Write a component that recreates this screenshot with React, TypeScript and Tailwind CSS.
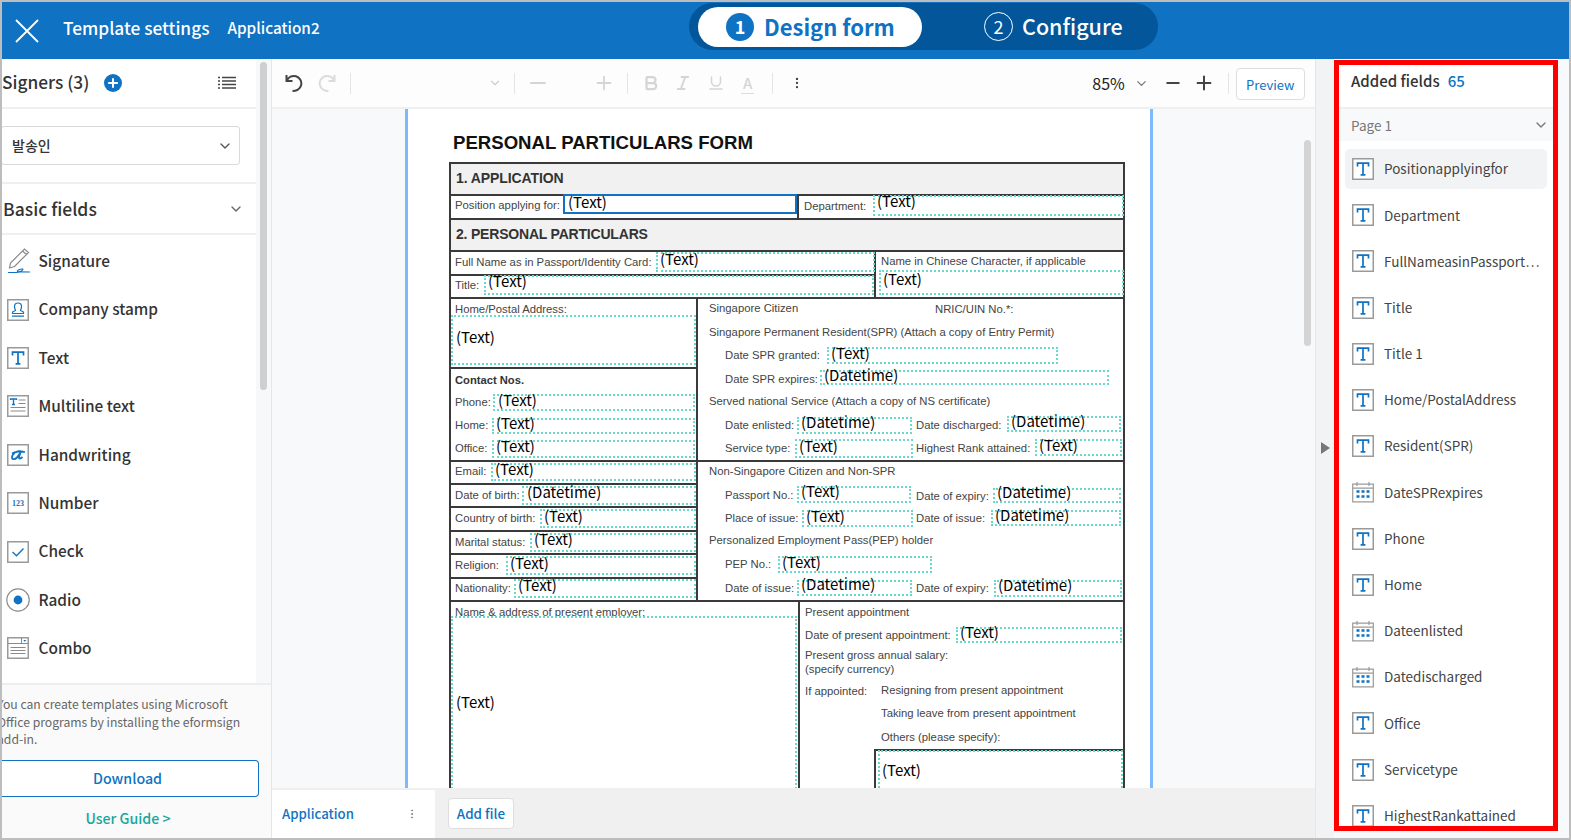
import { ChevronDown, Minus, Plus, EllipsisVertical, Bold, Italic, Underline } from "lucide-react";

const sans = "font-['Noto_Sans_CJK_KR','Noto_Sans',sans-serif]";

type Line = [number, number, number, number];
type Label = [string, number, number];
type Field = [string, number, number, number, number, number, number];

// page canvas origin is (407, 110)
const ox = 407;
const oy = 110;

const lines: Line[] = [
  [449, 162, 1124, 162],
  [449, 194, 1124, 194],
  [449, 218, 1124, 218],
  [449, 250, 1124, 250],
  [449, 274, 875, 274],
  [449, 297, 1124, 297],
  [449, 367, 697, 367],
  [449, 460, 1124, 460],
  [449, 483, 697, 483],
  [449, 506, 697, 506],
  [449, 530, 697, 530],
  [449, 553, 697, 553],
  [449, 577, 697, 577],
  [449, 600, 1124, 600],
  [874, 749, 1124, 749],
  [449, 162, 449, 790],
  [1123, 162, 1123, 790],
  [797, 194, 797, 218],
  [874, 250, 874, 297],
  [696, 297, 696, 600],
  [798, 600, 798, 790],
  [874, 749, 874, 790],
];

const labels: Label[] = [
  ["Position applying for:", 455, 206],
  ["Department:", 804, 207],
  ["Full Name as in Passport/Identity Card:", 455, 263],
  ["Title:", 455, 286],
  ["Name in Chinese Character, if applicable", 881, 262],
  ["Home/Postal Address:", 455, 310],
  ["Phone:", 455, 403],
  ["Home:", 455, 426],
  ["Office:", 455, 449],
  ["Email:", 455, 472],
  ["Date of birth:", 455, 496],
  ["Country of birth:", 455, 519],
  ["Marital status:", 455, 543],
  ["Religion:", 455, 566],
  ["Nationality:", 455, 589],
  ["Singapore Citizen", 709, 309],
  ["NRIC/UIN No.*:", 935, 310],
  ["Singapore Permanent Resident(SPR) (Attach a copy of Entry Permit)", 709, 333],
  ["Date SPR granted:", 725, 356],
  ["Date SPR expires:", 725, 380],
  ["Served national Service (Attach a copy of NS certificate)", 709, 402],
  ["Date enlisted:", 725, 426],
  ["Date discharged:", 916, 426],
  ["Service type:", 725, 449],
  ["Highest Rank attained:", 916, 449],
  ["Non-Singapore Citizen and Non-SPR", 709, 472],
  ["Passport No.:", 725, 496],
  ["Date of expiry:", 916, 497],
  ["Place of issue:", 725, 519],
  ["Date of issue:", 916, 519],
  ["Personalized Employment Pass(PEP) holder", 709, 541],
  ["PEP No.:", 725, 565],
  ["Date of issue:", 725, 589],
  ["Date of expiry:", 916, 589],
  ["Name & address of present employer:", 455, 613],
  ["Present appointment", 805, 613],
  ["Date of present appointment:", 805, 636],
  ["Present gross annual salary:", 805, 656],
  ["(specify currency)", 805, 670],
  ["If appointed:", 805, 692],
  ["Resigning from present appointment", 881, 691],
  ["Taking leave from present appointment", 881, 714],
  ["Others (please specify):", 881, 738],
];

// text, left, top, right, bottom, text x, text center y
const fields: Field[] = [
  ["(Text)", 873, 195, 1124, 216, 877, 202],
  ["(Text)", 656, 252, 875, 272, 660, 260],
  ["(Text)", 484, 275, 874, 295, 488, 282],
  ["(Text)", 879, 270, 1124, 295, 883, 280],
  ["(Text)", 451, 315, 696, 365, 456, 338],
  ["(Text)", 493, 394, 695, 411, 498, 401],
  ["(Text)", 492, 418, 695, 434, 496, 424],
  ["(Text)", 492, 440, 695, 458, 496, 447],
  ["(Text)", 491, 463, 696, 481, 495, 470],
  ["(Datetime)", 522, 486, 696, 505, 527, 493],
  ["(Text)", 540, 509, 696, 528, 544, 517],
  ["(Text)", 530, 533, 696, 552, 534, 540],
  ["(Text)", 506, 556, 696, 575, 510, 564],
  ["(Text)", 514, 579, 696, 598, 518, 586],
  ["(Text)", 827, 347, 1058, 364, 831, 354],
  ["(Datetime)", 820, 370, 1109, 385, 824, 376],
  ["(Datetime)", 797, 417, 912, 434, 801, 423],
  ["(Datetime)", 1007, 416, 1121, 432, 1011, 422],
  ["(Text)", 795, 439, 913, 458, 799, 447],
  ["(Text)", 1035, 439, 1122, 456, 1039, 446],
  ["(Text)", 797, 486, 911, 503, 801, 492],
  ["(Datetime)", 993, 488, 1121, 503, 997, 493],
  ["(Text)", 802, 510, 913, 527, 806, 517],
  ["(Datetime)", 991, 510, 1121, 526, 995, 516],
  ["(Text)", 778, 556, 932, 573, 782, 563],
  ["(Datetime)", 797, 580, 912, 596, 801, 585],
  ["(Datetime)", 994, 580, 1122, 597, 998, 586],
  ["(Text)", 451, 616, 797, 800, 456, 703],
  ["(Text)", 956, 627, 1122, 643, 960, 633],
  ["(Text)", 878, 750, 1123, 800, 882, 771],
];

const IconBox = ({ children }: { children: React.ReactNode }) => (
  <svg width="22" height="22" viewBox="0 0 22 22" className="shrink-0">
    <rect x="0.75" y="0.75" width="20.5" height="20.5" fill="#fff" stroke="#9a9a9a" strokeWidth="1.5" />
    {children}
  </svg>
);

const TIcon = () => (
  <IconBox>
    <path d="M5.5 8.5V5.2h11v3.3M11 5.2v11.6M8.6 16.8h4.8" fill="none" stroke="#0f72c2" strokeWidth="1.7" />
  </IconBox>
);

const CalIcon = () => (
  <svg width="22" height="22" viewBox="0 0 22 22" className="shrink-0">
    <path d="M.7 3.2h20.6v17.6H.7zM.7 7.2h20.6M5 1v4M17 1v4" fill="#fff" stroke="#9a9a9a" strokeWidth="1.2" />
    <path d="M4.5 10.5h3M9.5 10.5h3M14.5 10.5h3M4.5 15.5h3M9.5 15.5h3M14.5 15.5h3" stroke="#0f72c2" strokeWidth="2.4" />
  </svg>
);

const SignatureIcon = () => (
  <svg width="24" height="26" viewBox="0 0 24 26" className="shrink-0">
    <path d="M2.500 20l1-5L17.500 1l4 3.500-14 14zM15.500 3l4 3.500" fill="none" stroke="#8a8a8a" strokeWidth="1.200" />
    <path d="M1 24.500h8c4 0 7-2.500 7-3.200 0-1-7 .7-5.500 2.200.5.500 3 .5 12.500.5" fill="none" stroke="#0f72c2" strokeWidth="1.100" />
  </svg>
);

const UndoIcon = ({ color, flip }: { color: string; flip?: boolean }) => (
  <svg width="18" height="18" viewBox="0 0 18 18" className={`shrink-0 ${flip ? "-scale-x-100" : ""}`}>
    <path d="M1.500 1v6h6M1.800 6.800A7.500 7.500 0 1 1 7.500 16.800" fill="none" stroke={color} strokeWidth="2" />
  </svg>
);

const basicFields: [string, React.ReactNode][] = [
  ["Signature", <SignatureIcon />],
  ["Company stamp", <IconBox><path d="M8.5 11.5c0-1-1-1.500-1-4 0-2.200 1.500-3.500 3.500-3.500s3.500 1.300 3.500 3.500c0 2.500-1 3-1 4l3 1.500v1.500H5.500V13zM5 17.200h12" fill="none" stroke="#0f72c2" strokeWidth="1.200" /></IconBox>],
  ["Text", <TIcon />],
  ["Multiline text", <IconBox><path d="M3.500 5v-1h6v1M6.500 4v5.500M5 9.500h3" fill="none" stroke="#0f72c2" strokeWidth="1.300" /><path d="M11.500 5h7M11.500 8.500h7M3.500 12.500h15M3.500 16h15" stroke="#8a8a8a" strokeWidth="1" /></IconBox>],
  ["Handwriting", <IconBox><path d="M14 7.500c-4-1.500-9 2.500-9 6 0 2.500 3 2 5 0l3.500-5-1.500 4.500c-.5 2 1.500 2 3.500 0M5 9.500c3-2 9-2.500 13-1.500" fill="none" stroke="#0f72c2" strokeWidth="1.800" /></IconBox>],
  ["Number", <IconBox><text x="11" y="13.500" textAnchor="middle" fontSize="8" fontWeight="700" fill="#0f72c2" fontFamily="'Liberation Serif',serif">123</text></IconBox>],
  ["Check", <IconBox><path d="M5.500 11l4 3.800 7-7.300" fill="none" stroke="#0f72c2" strokeWidth="1.300" /></IconBox>],
  ["Radio", <svg width="24" height="24" viewBox="0 0 24 24" className="shrink-0 -ml-px"><circle cx="12" cy="12" r="11.200" fill="#fff" stroke="#8a8a8a" strokeWidth="1.200" /><circle cx="12" cy="12" r="4.400" fill="#0f72c2" /></svg>],
  ["Combo", <IconBox><path d="M.75 6.500h20.500M14.500.75v5.750M3.500 10.500h15M3.500 13.500h15M3.500 16.500h15" fill="none" stroke="#8a8a8a" strokeWidth="1" /><path d="M16.300 3h3l-1.500 1.800z" fill="#0f72c2" /></IconBox>],
];

const addedFields: [string, boolean][] = [
  ["Positionapplyingfor", false],
  ["Department", false],
  ["FullNameasinPassport⋯", false],
  ["Title", false],
  ["Title 1", false],
  ["Home/PostalAddress", false],
  ["Resident(SPR)", false],
  ["DateSPRexpires", true],
  ["Phone", false],
  ["Home", false],
  ["Dateenlisted", true],
  ["Datedischarged", true],
  ["Office", false],
  ["Servicetype", false],
  ["HighestRankattained", false],
];

const Sep = () => <div className="h-[21px] w-px bg-[#e4e4e4]" />;

const FormPage = () => (
  <div className="relative h-full w-[748px] overflow-hidden border-x-[3px] border-x-[#7db9fb] bg-white font-['Liberation_Sans',Arial,sans-serif]">
    {/* document canvas: everything is placed where the form author dropped it */}
    <div className="absolute top-px bottom-0 left-[-1px] w-[745px]">
      <div className="absolute bg-[#f1f1f1]" style={{ left: 449 - ox, top: 162 - oy, width: 675, height: 32 }} />
      <div className="absolute bg-[#f1f1f1]" style={{ left: 449 - ox, top: 218 - oy, width: 675, height: 32 }} />
      <div className="absolute whitespace-nowrap text-[18.6px] leading-none font-bold text-[#111]" style={{ left: 453 - ox, top: 134 - oy }}>
        PERSONAL PARTICULARS FORM
      </div>
      <div className="absolute text-[14px] leading-none font-bold tracking-[-0.1px] text-[#333]" style={{ left: 456 - ox, top: 171 - oy }}>
        1. APPLICATION
      </div>
      <div className="absolute text-[14px] leading-none font-bold tracking-[-0.2px] text-[#333]" style={{ left: 456 - ox, top: 227 - oy }}>
        2. PERSONAL PARTICULARS
      </div>
      <div className="absolute text-[11.2px] leading-none font-bold text-[#333]" style={{ left: 455 - ox, top: 375 - oy }}>
        Contact Nos.
      </div>
      {lines.map(([x1, y1, x2, y2], i) => (
        <div
          key={i}
          className="absolute bg-[#3a3a3a]"
          style={{ left: x1 - ox, top: y1 - oy, width: Math.max(x2 - x1, 2), height: Math.max(y2 - y1, 2) }}
        />
      ))}
      {labels.map(([t, x, y], i) => (
        <div key={i} className="absolute whitespace-nowrap text-[11.3px] leading-none text-[#444]" style={{ left: x - ox, top: y - 6 - oy }}>
          {t}
        </div>
      ))}
      <div className="absolute border-2 border-[#0f72c2]" style={{ left: 563 - ox, top: 194 - oy, width: 234, height: 20 }} />
      <div className={`absolute text-[15px] leading-none text-black ${sans}`} style={{ left: 568 - ox, top: 194 - oy }}>
        (Text)
      </div>
      {fields.map(([t, x1, y1, x2, y2, tx, ty], i) => (
        <div key={i}>
          <div
            className="absolute border-2 border-dotted border-[#6ad8cb]"
            style={{ left: x1 - ox, top: y1 - oy, width: x2 - x1, height: y2 - y1 }}
          />
          <div
            className={`absolute whitespace-nowrap text-[15px] leading-none text-black ${sans}`}
            style={{ left: tx - ox, top: ty - 9 - oy }}
          >
            {t}
          </div>
        </div>
      ))}
    </div>
  </div>
);

export default function App() {
  return (
    <div className={`flex h-[840px] w-[1571px] flex-col overflow-hidden border-2 border-[#bdbdbd] bg-white ${sans}`}>
      <header className="relative flex h-[57px] shrink-0 items-center bg-[#0f72c2] text-white">
        <svg width="24" height="24" viewBox="0 0 24 24" className="ml-[13px]">
          <path d="M1 1l22 22M23 1L1 23" stroke="#fff" strokeWidth="1.800" fill="none" />
        </svg>
        <span className="mb-[6px] ml-[24px] text-[17.3px] leading-none font-medium">Template settings</span>
        <span className="mb-[6px] ml-[18px] text-[15.3px] leading-none font-medium">Application2</span>
        <div className="absolute top-px left-[687px] flex h-[47px] w-[469px] items-center rounded-full bg-[#03569a] pl-[9px]">
          <div className="flex h-[40px] w-[224px] items-center rounded-full bg-white pl-[28px] text-[#0f72c2]">
            <span className="flex h-7 w-7 items-center justify-center rounded-full bg-[#0f72c2] pb-[2px] text-[18px] leading-none font-bold text-white">1</span>
            <span className="mb-[2px] ml-[10px] text-[22px] leading-none font-bold">Design form</span>
          </div>
          <span className="ml-[62px] flex h-[29px] w-[29px] items-center justify-center rounded-full border-[1.5px] border-white pb-[2px] text-[18px] leading-none">2</span>
          <span className="mb-[2px] ml-[9px] text-[21.5px] leading-none font-medium">Configure</span>
        </div>
      </header>

      <div className="flex min-h-0 flex-1">
        <aside className="flex w-[270px] shrink-0 flex-col border-r border-[#e6e6e6] bg-[#f7f8fa]">
          <div className="flex min-h-0 flex-1">
            <div className="flex w-[254px] flex-col bg-white">
              <div className="flex h-[50px] shrink-0 items-center border-b-2 border-[#efefef] pr-[20px]">
                <span className="mb-[2px] text-[17.3px] leading-none font-medium text-[#333]">Signers (3)</span>
                <span className="ml-[15px] flex h-[18px] w-[18px] items-center justify-center rounded-full bg-[#0f72c2]">
                  <Plus size={14} color="#fff" strokeWidth={3.500} />
                </span>
                <svg width="18" height="14" viewBox="0 0 18 14" className="ml-auto">
                  <path d="M0 1.500h2M4 1.500h14M0 5h2M4 5h14M0 8.500h2M4 8.500h14M0 12h2M4 12h14" stroke="#444" strokeWidth="1.400" />
                </svg>
              </div>
              <div className="flex h-[75px] shrink-0 items-center border-b-2 border-[#efefef]">
                <div className="-ml-px flex h-[39px] w-[239px] items-center justify-between rounded-[3px] border border-[#d9d9d9] pr-[6px] pl-[10px]">
                  <span className="text-[14px] font-medium text-[#333]">발송인</span>
                  <ChevronDown size={16} color="#555" />
                </div>
              </div>
              <div className="flex h-[51px] shrink-0 items-center justify-between border-b-2 border-[#efefef] pr-[12px] pl-px">
                <span className="text-[17.5px] leading-none font-medium text-[#333]">Basic fields</span>
                <ChevronDown size={16} color="#666" />
              </div>
              <div className="flex flex-col pt-[2px]">
                {basicFields.map(([name, icon]) => (
                  <div key={name} className="flex h-[48.400px] items-center pl-[5px]">
                    <span className="flex w-[31.500px]">{icon}</span>
                    <span className="mb-[1px] text-[15.4px] leading-none font-medium text-[#333]">{name}</span>
                  </div>
                ))}
              </div>
            </div>
            <div className="flex-1 px-1 pt-[3px]">
              <div className="h-[328px] rounded-full bg-[#cfcfcf]" />
            </div>
          </div>
          <div className="relative h-[155px] shrink-0 border-t-2 border-[#ededed] bg-[#fafafa]">
            <p className="-ml-[5px] w-[270px] pt-[11px] text-[12.2px] leading-[17.600px] text-[#666]">
              You can create templates using Microsoft
              <br />
              Office programs by installing the eformsign
              <br />
              add-in.
            </p>
            <button className="mt-[11px] flex h-[37px] w-[257px] items-center justify-center rounded-r-[4px] border border-l-0 border-[#0f72c2] bg-white pr-[5px] text-[14.2px] font-medium text-[#0f72c2]">
              Download
            </button>
            <div className="mt-[14px] w-[252px] text-center text-[14.2px] leading-none font-medium text-[#17a79b]">User Guide &gt;</div>
          </div>
        </aside>

        <main className="flex min-w-0 flex-1 flex-col bg-[#f8f9fb]">
          <div className="flex h-[50px] shrink-0 items-center border-b-2 border-[#efefef] bg-[#fdfdfd]">
            <div className="ml-[13px]"><UndoIcon color="#444" /></div>
            <div className="ml-[15px]"><UndoIcon color="#dcdcdc" flip /></div>
            <div className="ml-[14px]"><Sep /></div>
            <ChevronDown size={14} color="#ccc" className="ml-[137px]" />
            <div className="ml-[12px]"><Sep /></div>
            <Minus size={24} color="#d5d5d5" strokeWidth={2} className="ml-[11px]" />
            <Plus size={22} color="#d5d5d5" strokeWidth={2} className="ml-[43px]" />
            <div className="ml-[12px]"><Sep /></div>
            <Bold size={18} color="#d5d5d5" strokeWidth={3} className="ml-[14px]" />
            <Italic size={18} color="#d5d5d5" strokeWidth={2.500} className="ml-[14px]" />
            <Underline size={18} color="#d5d5d5" strokeWidth={2} className="ml-[15px]" />
            <span className="ml-[16px] border-b border-[#dcdcdc] px-[2px] text-[15px] leading-[20px] font-medium text-[#d5d5d5]">A</span>
            <div className="ml-[18px]"><Sep /></div>
            <EllipsisVertical size={14} color="#444" className="ml-[17px]" />
            <span className="ml-[288px] text-[16px] leading-none text-[#222]">85%</span>
            <ChevronDown size={15} color="#777" className="ml-[9px]" />
            <Minus size={20} color="#444" strokeWidth={2.200} className="ml-[14px]" />
            <Plus size={22} color="#444" strokeWidth={2.200} className="ml-[10px]" />
            <div className="ml-[13px]"><Sep /></div>
            <button className="mt-[2px] ml-[7px] flex h-[32px] w-[69px] items-center justify-center rounded-[4px] border border-[#dedede] bg-white pt-[1px] text-[13px] text-[#0f72c2]">
              Preview
            </button>
          </div>
          <div className="flex min-h-0 flex-1">
            <div className="min-w-0 flex-1 pl-[133px]">
              <FormPage />
            </div>
            <div className="w-[11px] shrink-0 pt-[31px]">
              <div className="h-[206px] w-[7px] rounded-full bg-[#d4d4d4]" />
            </div>
          </div>
          <div className="flex h-[50px] shrink-0 border-t-2 border-[#f0f0f0] bg-[#f0f0f0]">
            <div className="flex w-[163px] items-center justify-between bg-white pr-[17px] pl-[10px] text-[13.2px] font-medium text-[#0f72c2]">
              Application
              <EllipsisVertical size={12} color="#777" />
            </div>
            <button className="mt-[8px] ml-[13px] flex h-[31px] w-[66px] items-center justify-center rounded-[4px] border border-[#dedede] bg-white text-[13.4px] font-medium text-[#0f72c2]">
              Add file
            </button>
          </div>
        </main>

        <div className="flex w-[19px] shrink-0 items-center justify-center border-l border-[#e6e6e6] bg-[#f2f3f5]">
          <div className="mt-[-2px] h-0 w-0 border-y-[6px] border-l-[9px] border-y-transparent border-l-[#777]" />
        </div>

        <div className="flex w-[235px] shrink-0 flex-col bg-[#f8f9fb] pt-px">
          <aside className="flex h-[771px] w-[224px] flex-col overflow-hidden border-[5px] border-[#ff0000] bg-white">
            <div className="flex h-[44px] shrink-0 items-center border-b-2 border-[#efefef] pb-[9px] pl-[12px] text-[15px] font-medium text-[#333]">
              Added fields<span className="ml-[8px] text-[#0f72c2]">65</span>
            </div>
            <div className="flex h-[32px] shrink-0 items-center justify-between bg-[#f8f9fa] pr-[4px] pl-[12px] text-[13.500px] text-[#777]">
              Page 1
              <ChevronDown size={16} color="#777" />
            </div>
            <div className="flex flex-col px-[6px] pt-[5px]">
              {addedFields.map(([name, isDate], i) => (
                <div key={name} className="flex h-[46.200px] shrink-0 items-center">
                  <div className={`flex h-[40px] w-[205px] items-center rounded-[5px] pl-[7px] ${i === 0 ? "bg-[#f2f3f5]" : ""}`}>
                    {isDate ? <CalIcon /> : <TIcon />}
                    <span className="ml-[10px] whitespace-nowrap text-[13.500px] leading-none text-[#444]">{name}</span>
                  </div>
                </div>
              ))}
            </div>
          </aside>
        </div>
      </div>
    </div>
  );
}
